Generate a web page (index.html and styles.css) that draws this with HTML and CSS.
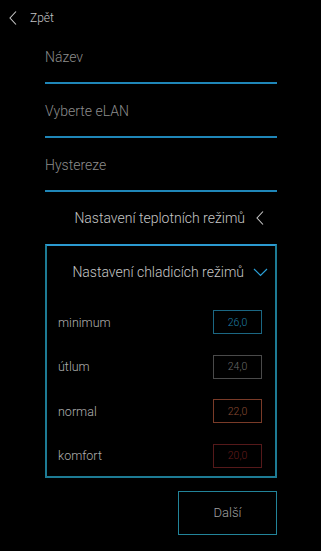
FILE: index.html
```html
<!DOCTYPE html>
<html lang="cs">
<head>
<meta charset="utf-8">
<title>Nastavení</title>
<link rel="stylesheet" href="styles.css">
</head>
<body>
<div class="screen">
  <header class="topbar">
    <svg class="back-icon" width="10" height="16" viewBox="0 0 10 16"><path d="M8 1.5 L2 8 L8 14.5" fill="none" stroke="#c8c8c8" stroke-width="1.1"/></svg>
    <span class="back-text">Zpět</span>
  </header>
  <main class="form">
    <div class="field">Název</div>
    <div class="field">Vyberte eLAN</div>
    <div class="field">Hystereze</div>
    <div class="section-toggle">
      <span>Nastavení teplotních režimů</span>
      <svg class="chev-left" width="10" height="16" viewBox="0 0 10 16"><path d="M8 1.5 L2 8 L8 14.5" fill="none" stroke="#c8c8c8" stroke-width="1.1"/></svg>
    </div>
    <section class="panel">
      <div class="panel-head">
        <span>Nastavení chladicích režimů</span>
        <svg class="chev-down" width="15" height="10" viewBox="0 0 15 10"><path d="M1 2 L7.5 8.5 L14 2" fill="none" stroke="#2a9fd6" stroke-width="1.2"/></svg>
      </div>
      <div class="rows">
        <div class="row"><span class="label">minimum</span><span class="val val-min">26,0</span></div>
        <div class="row"><span class="label">útlum</span><span class="val val-utl">24,0</span></div>
        <div class="row"><span class="label">normal</span><span class="val val-nor">22,0</span></div>
        <div class="row"><span class="label">komfort</span><span class="val val-kom">20,0</span></div>
      </div>
    </section>
    <div class="actions">
      <button class="next">Další</button>
    </div>
  </main>
</div>
</body>
</html>
```

FILE: styles.css
```css
html, body {
  margin: 0;
  padding: 0;
  background: #000;
}
body {
  font-family: Roboto, "Liberation Sans", sans-serif;
  font-weight: 300;
  color: #c0c0c0;
  width: 321px;
  height: 551px;
  overflow: hidden;
}
.topbar {
  height: 30px;
  display: flex;
  align-items: flex-start;
  padding-top: 10px;
  box-sizing: border-box;
  padding-left: 8px;
}
.back-icon {
  display: block;
}
.back-text {
  font-size: 12px;
  line-height: 16px;
  margin-left: 12px;
  color: #c4c4c4;
}
.form {
  padding: 0 44px 0 45px;
}
.field {
  line-height: 20px;
  padding-top: 17px;
  height: 35px;
  font-size: 14px;
  color: #8c8c8c;
  border-bottom: 2px solid #1f86b8;
}
.section-toggle {
  height: 52px;
  display: flex;
  align-items: center;
  justify-content: flex-end;
  font-size: 14px;
  color: #c6c6c6;
  padding-right: 12px;
}
.chev-left {
  margin-left: 10px;
  display: block;
}
.panel {
  border: 2px solid #1d7b94;
  border-top-color: #2b9ad0;
}
.panel-head {
  height: 52px;
  display: flex;
  align-items: center;
  justify-content: flex-end;
  font-size: 14px;
  color: #c6c6c6;
  padding-right: 7px;
}
.chev-down {
  margin-left: 9px;
  display: block;
}
.rows {
  padding-top: 4px;
  display: flex;
  flex-direction: column;
  gap: 4.5px;
}
.row {
  height: 40px;
  display: flex;
  align-items: center;
  justify-content: space-between;
  padding: 0 13px 0 11px;
}
.label {
  font-size: 12.5px;
  color: #b0b0b0;
}
.val {
  width: 49px;
  height: 24px;
  box-sizing: border-box;
  border: 1px solid;
  display: flex;
  align-items: center;
  justify-content: center;
  font-size: 10.5px;
}
.val-min { border-color: #1b6783; color: #1f7fa8; }
.val-utl { border-color: #4a4a4a; color: #6a6a6a; }
.val-nor { border-color: #7a3b28; color: #8a4a32; }
.val-kom { border-color: #55191a; color: #661c1c; }
.actions {
  display: flex;
  justify-content: flex-end;
  margin-top: 13px;
}
.next {
  width: 99px;
  height: 44px;
  background: #000;
  border: 1.5px solid #22849a;
  color: #a0a0a0;
  font-family: Roboto, "Liberation Sans", sans-serif;
  font-weight: 300;
  font-size: 13px;
  padding: 0;
}
```
